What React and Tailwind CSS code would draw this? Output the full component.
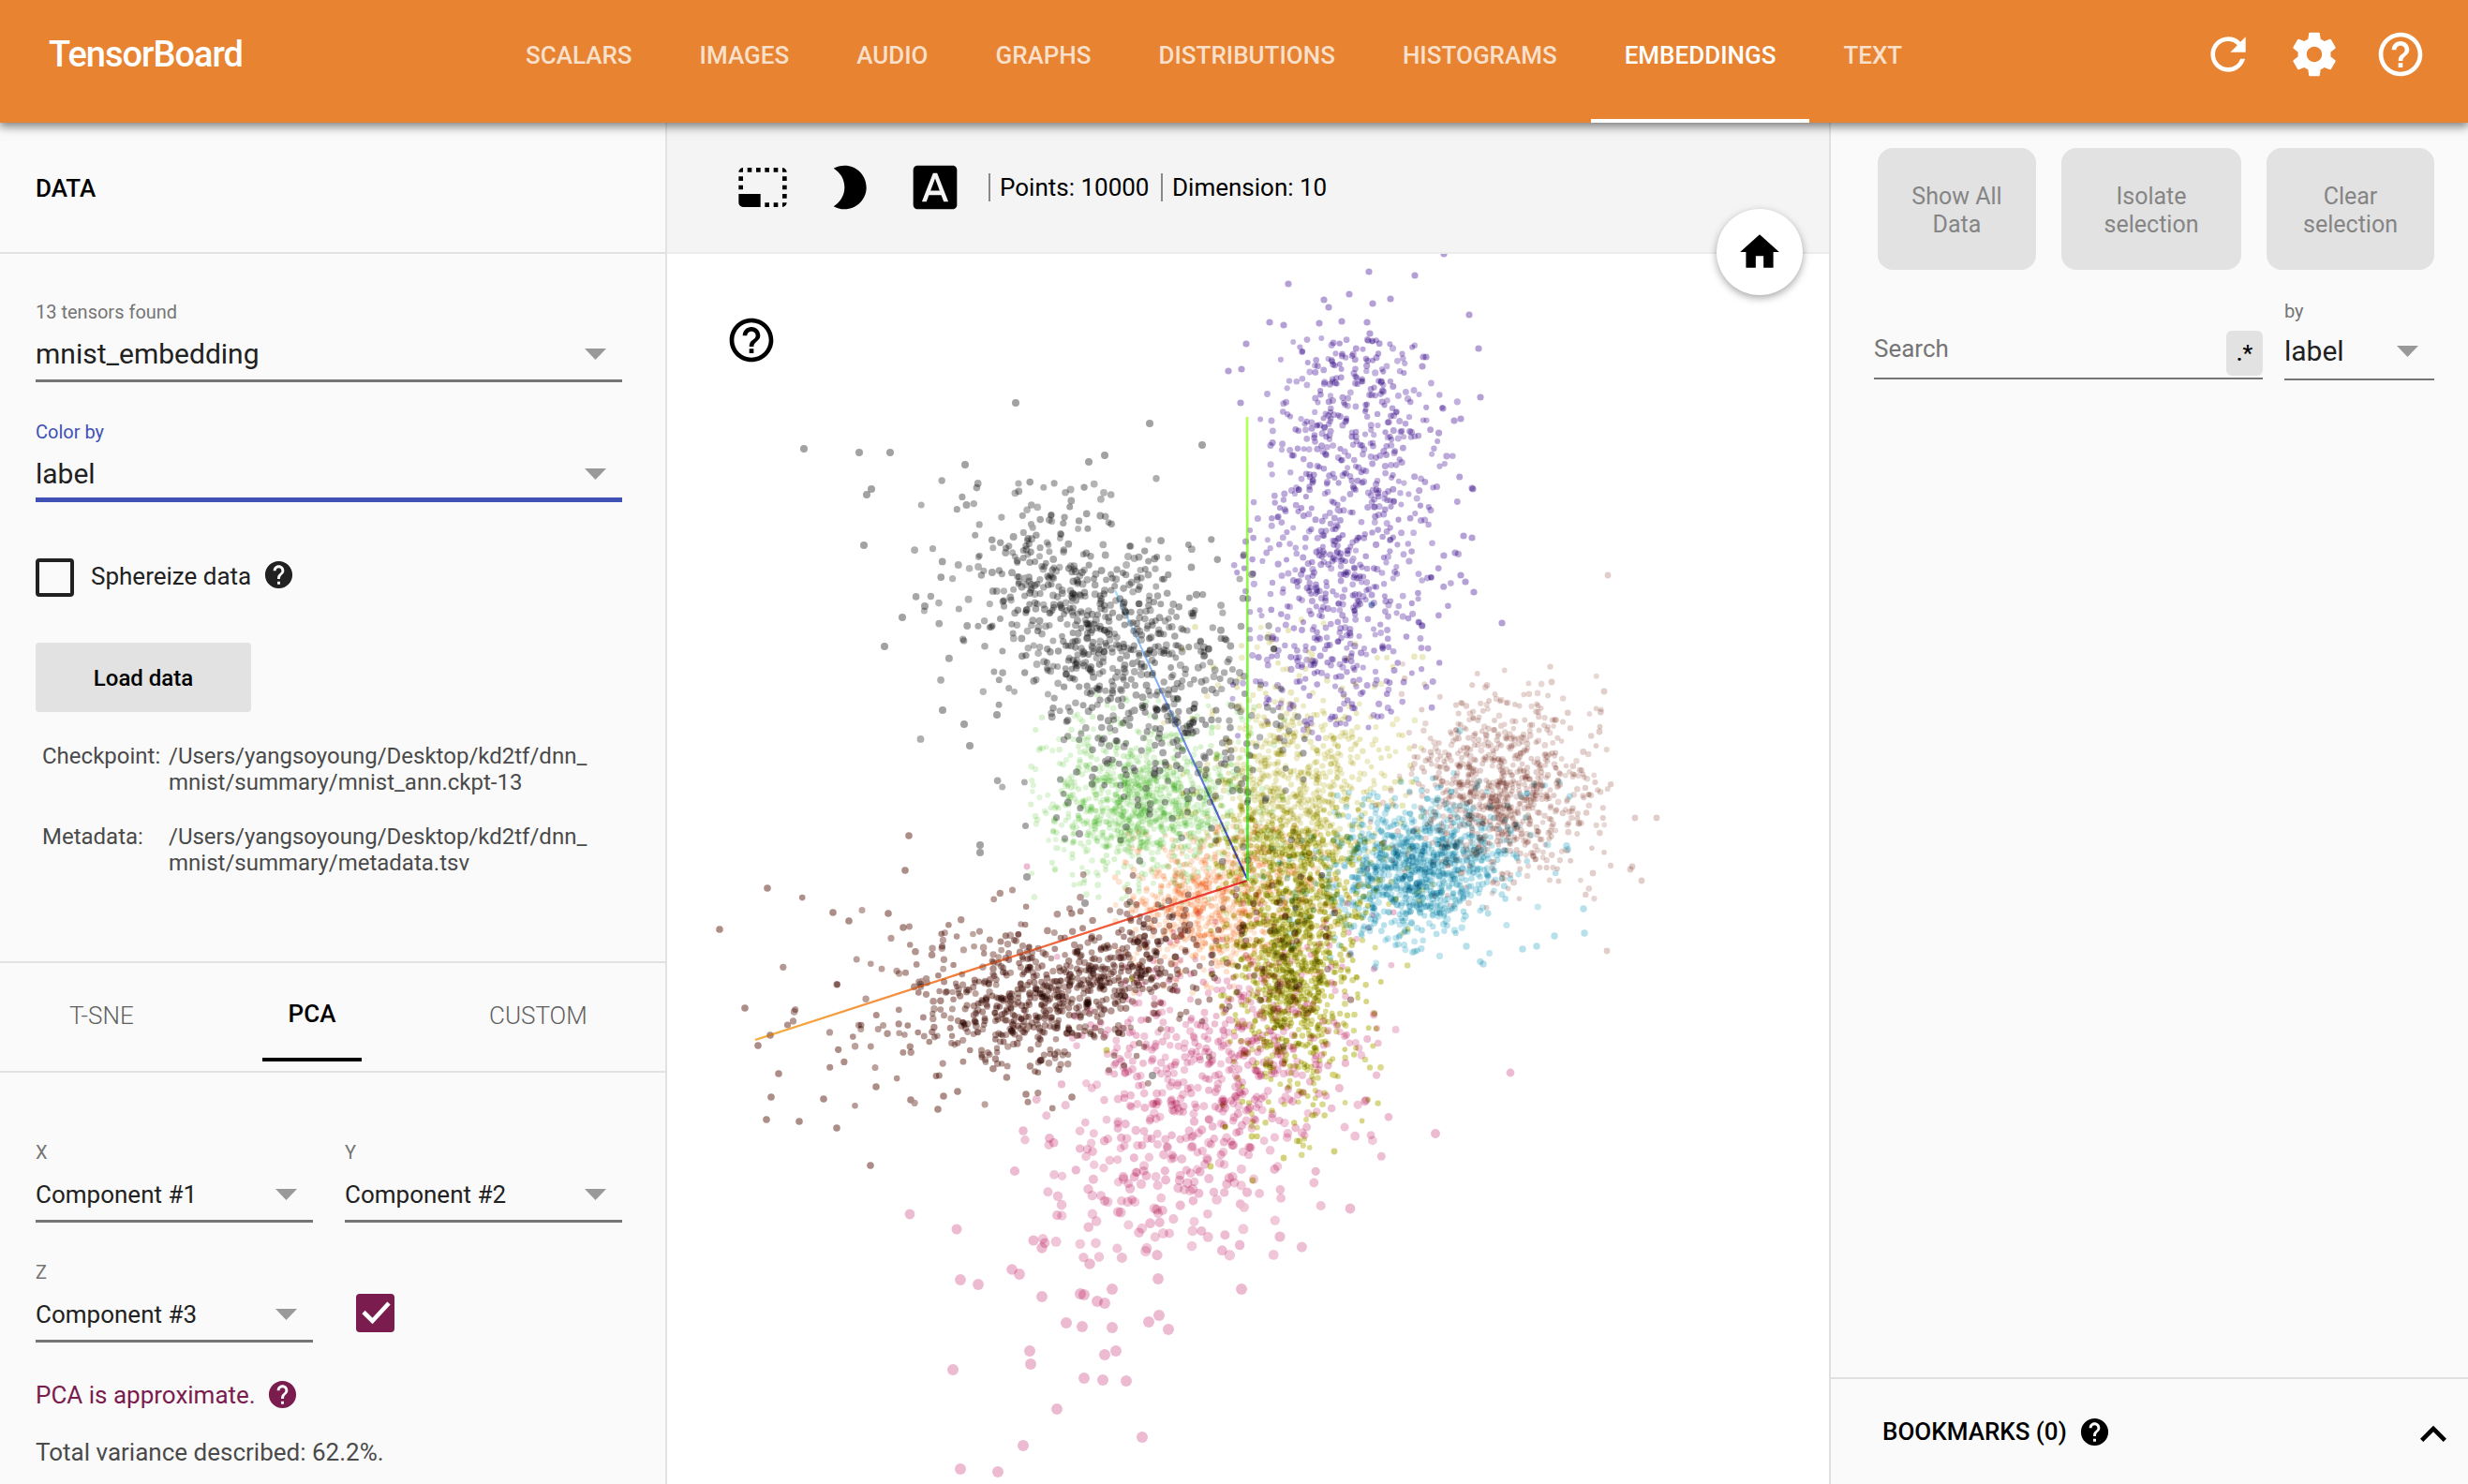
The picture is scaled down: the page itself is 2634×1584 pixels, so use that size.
import React from "react";
import {
  MdBrightness2,
  MdFontDownload,
  MdHelp,
  MdHelpOutline,
  MdHome,
  MdKeyboardArrowUp,
  MdPhotoSizeSelectSmall,
  MdRefresh,
} from "react-icons/md";

/* ---------- projected points ---------- */

function makeRandom(seed) {
  let s = seed;
  return () => {
    s = (s + 0x6d2b79f5) | 0;
    let t = Math.imul(s ^ (s >>> 15), 1 | s);
    t = (t + Math.imul(t ^ (t >>> 7), 61 | t)) ^ t;
    return ((t ^ (t >>> 14)) >>> 0) / 4294967296;
  };
}

const random = makeRandom(20170);
const normal = () =>
  Math.sqrt(-2 * Math.log(1 - random())) * Math.cos(2 * Math.PI * random());

/* Each blob: [count, centre x, centre y, major spread, minor spread, angle in degrees] */
const LABELS = [
  { fill: "#d9f2d0", radius: () => 3, blobs: [[680, 1225, 862, 50, 36, 0], [360, 1200, 850, 66, 50, 0], [60, 1290, 800, 70, 70, 0]] },
  { fill: "#e9e7bb", radius: () => 3, blobs: [[560, 1378, 850, 46, 46, 0], [300, 1395, 825, 70, 80, 0]] },
  { fill: "#fddfca", radius: () => 3, blobs: [[520, 1282, 972, 42, 36, 0], [260, 1330, 940, 54, 54, 0]] },
  { fill: "#e1cdc9", radius: () => 3, blobs: [[560, 1600, 842, 40, 46, 0], [330, 1610, 845, 60, 64, 0]] },
  { fill: "#b6e0ea", radius: () => 3.3, blobs: [[520, 1522, 926, 40, 30, -20], [480, 1500, 926, 64, 42, -15]] },
  { fill: "#b5a0d6", radius: () => 3.2, blobs: [[200, 1458, 465, 46, 46, 0], [520, 1432, 610, 50, 85, 0], [90, 1440, 385, 42, 30, 0], [100, 1420, 710, 75, 50, 0]] },
  { fill: "#d4d37c", radius: () => 3, blobs: [[620, 1374, 1030, 28, 62, 0], [470, 1385, 1035, 44, 90, 0], [200, 1375, 930, 40, 36, 0]] },
  { fill: "#ad8d87", radius: () => 3.4, blobs: [[240, 1098, 1075, 48, 28, -8], [220, 1185, 1038, 46, 24, -28], [370, 1090, 1055, 110, 46, -8], [70, 1330, 950, 90, 70, 0]] },
  { fill: "#a2a2a2", radius: () => 3.6, blobs: [[360, 1188, 685, 75, 42, 52], [380, 1175, 680, 105, 66, 42], [70, 1095, 600, 52, 48, 0], [90, 1250, 800, 75, 65, 20]] },
  { fill: "#edbbd1", radius: (y) => Math.min(5.6, Math.max(3, 3.2 + (y - 1020) / 150)), blobs: [[270, 1305, 1120, 64, 62, 0], [290, 1255, 1200, 70, 80, 0], [130, 1390, 1070, 75, 62, 0], [60, 1235, 1280, 60, 60, 0]] },
];

const BOUNDS = [
  [1100, 740, 1400, 970], [1230, 660, 1530, 1000], [1190, 880, 1450, 1060], [1450, 700, 1720, 970],
  [1340, 800, 1690, 1035], [1312, 360, 1560, 790], [1290, 850, 1510, 1235], [830, 930, 1450, 1185],
  [960, 510, 1400, 930], [1080, 950, 1500, 1345],
];

const OUTLIERS = [
  [], [], [],
  [[1716, 614], [1656, 728], [1712, 738], [1707, 781], [1715, 1015], [1745, 873], [1768, 873], [1752, 940], [1742, 925], [1740, 928]],
  [[1464, 645], [1558, 780], [1691, 996], [1659, 999], [1640, 1010], [1583, 1029], [1625, 1013], [1565, 1010], [1690, 970]],
  [[1541, 271], [1461, 290], [1510, 294], [1375, 303], [1440, 314], [1413, 320], [1484, 319], [1465, 324], [1418, 328], [1568, 336], [1355, 344], [1370, 347], [1408, 345], [1432, 343], [1459, 344], [1462, 356], [1330, 367], [1578, 372], [1519, 381], [1522, 381], [1518, 391], [1580, 424], [1311, 396], [1325, 394], [1324, 430], [1540, 436], [1559, 447], [1552, 449], [1571, 521], [1572, 522], [1562, 572], [1571, 574], [1553, 590], [1559, 614], [1564, 621], [1573, 632], [1603, 665]],
  [[1208, 1045], [1181, 1121], [1337, 1260], [1336, 1213], [1370, 1236], [1424, 1229], [1292, 1245]],
  [[768, 992], [819, 948], [795, 1076], [809, 1116], [831, 1146], [823, 1171], [818, 1195], [853, 1197], [893, 1204], [929, 1244], [1001, 1184], [970, 892], [966, 929], [889, 974], [906, 983], [948, 975], [964, 990], [972, 1174], [1007, 1170], [1022, 1165], [1095, 1168], [1144, 1171], [822, 1105], [879, 1173], [935, 1160]],
  [[858, 479], [917, 483], [950, 483], [1084, 430], [1227, 452], [1283, 475], [1179, 486], [1162, 493], [925, 528], [930, 522], [1030, 496], [922, 582], [963, 659], [944, 690], [987, 647], [1006, 758], [1029, 773], [1035, 796], [1046, 902], [1046, 910], [1096, 936], [1158, 964], [1152, 890], [1230, 1148], [1064, 763]],
  [[971, 1296], [1021, 1312], [1103, 1324], [1112, 1332], [1025, 1366], [1044, 1371], [1080, 1355], [1088, 1360], [1112, 1384], [1163, 1349], [1153, 1381], [1157, 1382], [1171, 1389], [1179, 1391], [1187, 1376], [1236, 1365], [1237, 1404], [1226, 1411], [1247, 1419], [1138, 1412], [1155, 1416], [1187, 1417], [1099, 1442], [1100, 1456], [1179, 1446], [1191, 1442], [1017, 1462], [1157, 1471], [1177, 1473], [1202, 1474], [1128, 1504], [1219, 1534], [1092, 1543], [1025, 1568], [1065, 1571], [1325, 1376], [1366, 1320], [1441, 1290], [1532, 1210], [1612, 1145], [1096, 925], [1083, 1250], [1092, 1207], [1120, 1215]],
];

/* Points are dealt out to layers that multiply onto each other, so overlaps darken. */
const LAYER_COUNT = 48;

function project() {
  const layers = Array.from({ length: LAYER_COUNT }, () => []);
  const deal = (point) => layers[Math.floor(random() * LAYER_COUNT)].push(point);
  LABELS.forEach((label, i) => {
    const [x0, y0, x1, y1] = BOUNDS[i];
    label.blobs.forEach(([count, cx, cy, major, minor, angle]) => {
      const c = Math.cos((angle * Math.PI) / 180);
      const s = Math.sin((angle * Math.PI) / 180);
      for (let n = 0; n < count; n++) {
        const u = normal() * major;
        const v = normal() * minor;
        const x = cx + u * c - v * s;
        const y = cy + u * s + v * c;
        if (x < x0 || x > x1 || y < y0 || y > y1) continue;
        deal([x, y, label.radius(y) + random() * 0.6 - 0.2, label.fill, 0.78 + random() * 0.22]);
      }
    });
    OUTLIERS[i].forEach(([x, y]) => deal([x, y, label.radius(y) + 0.4, label.fill, 1]));
  });
  return layers;
}

const LAYERS = project();

function Scatter() {
  return (
    <svg className="isolate block h-full w-full bg-white" viewBox="712 271 1240 1313" preserveAspectRatio="none">
      <defs>
        <linearGradient id="axisX" gradientUnits="userSpaceOnUse" x1="1331" y1="940" x2="806" y2="1110">
          <stop offset="0" stopColor="#ee3a3a" />
          <stop offset="1" stopColor="#f6b040" />
        </linearGradient>
        <linearGradient id="axisY" gradientUnits="userSpaceOnUse" x1="1331" y1="940" x2="1331" y2="445">
          <stop offset="0" stopColor="#52e83a" />
          <stop offset="1" stopColor="#b8ff5c" />
        </linearGradient>
        <linearGradient id="axisZ" gradientUnits="userSpaceOnUse" x1="1331" y1="938" x2="1190" y2="630">
          <stop offset="0" stopColor="#3a44dc" />
          <stop offset="1" stopColor="#a5e0ff" />
        </linearGradient>
      </defs>
      <g fill="none">
        <path d="M1331 940L806 1110" stroke="url(#axisX)" strokeWidth="2.2" />
        <path d="M1331 938L1190 630" stroke="url(#axisZ)" strokeWidth="2" />
        <path d="M1331.5 940L1331 445" stroke="url(#axisY)" strokeWidth="2.6" />
      </g>
      {LAYERS.map((points, k) => (
        <g key={k} className="mix-blend-multiply">
          {points.map(([x, y, r, fill, alpha], n) => (
            <circle key={n} cx={x.toFixed(1)} cy={y.toFixed(1)} r={r.toFixed(1)} fill={fill} fillOpacity={alpha.toFixed(2)} />
          ))}
        </g>
      ))}
      <path d="M1331 940L806 1110" stroke="url(#axisX)" strokeWidth="2" opacity="0.45" />
      <path d="M1331 938L1190 630" stroke="url(#axisZ)" strokeWidth="1.8" opacity="0.35" />
      <path d="M1331.5 940L1331 445" stroke="url(#axisY)" strokeWidth="2.4" opacity="0.6" />
    </svg>
  );
}

/* ---------- small pieces ---------- */

function Gear({ className }) {
  return (
    <svg viewBox="0 0 24 24" fill="currentColor" className={className}>
      <path d="M19.43 12.98c.04-.32.07-.64.07-.98s-.03-.66-.07-.98l2.11-1.65c.19-.15.24-.42.12-.64l-2-3.46c-.12-.22-.39-.3-.61-.22l-2.49 1c-.52-.4-1.08-.73-1.69-.98l-.38-2.65C14.46 2.18 14.25 2 14 2h-4c-.25 0-.46.18-.49.42l-.38 2.65c-.61.25-1.17.59-1.69.98l-2.49-1c-.23-.09-.49 0-.61.22l-2 3.46c-.13.22-.07.49.12.64l2.11 1.65c-.04.32-.07.65-.07.98s.03.66.07.98l-2.11 1.65c-.19.15-.24.42-.12.64l2 3.46c.12.22.39.3.61.22l2.49-1c.52.4 1.08.73 1.69.98l.38 2.65c.03.24.24.42.49.42h4c.25 0 .46-.18.49-.42l.38-2.65c.61-.25 1.17-.59 1.69-.98l2.49 1c.23.09.49 0 .61-.22l2-3.46c.12-.22.07-.49-.12-.64l-2.11-1.65zM12 15.5c-1.93 0-3.5-1.57-3.5-3.5s1.57-3.5 3.5-3.5 3.5 1.57 3.5 3.5-1.57 3.5-3.5 3.5z" />
    </svg>
  );
}

function Caret() {
  return (
    <svg viewBox="0 0 23 12" className="h-[12px] w-[23px]" fill="#999999">
      <path d="M0 0h23L11.5 12z" />
    </svg>
  );
}

function Select({ label, value, big, active }) {
  return (
    <div className={active ? "h-[87px] border-b-[5px] border-[#3f51b5]" : "h-[87px] border-b-[3px] border-[#757575]"}>
      <div className={active ? "text-[20px] leading-[24px] text-[#3f51b5]" : "text-[20px] leading-[24px] text-[#757575]"}>{label}</div>
      <div className="mt-[15px] flex h-[36px] items-center justify-between pr-[17px]">
        <span className={big ? "text-[30px] leading-[36px] text-[#212121]" : "text-[26px] leading-[36px] text-[#212121]"}>{value}</span>
        <Caret />
      </div>
    </div>
  );
}

const NAV = ["SCALARS", "IMAGES", "AUDIO", "GRAPHS", "DISTRIBUTIONS", "HISTOGRAMS", "EMBEDDINGS", "TEXT"];

function Header() {
  return (
    <header className="relative z-10 flex h-[131px] bg-[#e78331] text-white shadow-[0_3px_10px_1px_rgba(0,0,0,0.5)]">
      <div className="w-[525px] pt-[34px] pl-[52px] text-[38px] leading-[48px] font-medium tracking-[-1px]">TensorBoard</div>
      <nav className="flex h-full">
        {NAV.map((name) => (
          <div
            key={name}
            className={
              name === "EMBEDDINGS"
                ? "h-full border-b-4 border-white px-[36px] pt-[42px] text-[26px] leading-[34px] font-medium"
                : "h-full px-[36px] pt-[42px] text-[26px] leading-[34px] font-medium text-white/75"
            }
          >
            {name}
          </div>
        ))}
      </nav>
      <div className="ml-auto flex gap-[36px] pt-[30px] pr-[44px]">
        <MdRefresh className="size-[56px]" />
        <Gear className="size-[56px]" />
        <MdHelpOutline className="size-[56px]" />
      </div>
    </header>
  );
}

function PathRow({ name, lines }) {
  return (
    <div className="flex text-[24px] leading-[28px] text-[#4a4a4a]">
      <div className="w-[135px]">{name}</div>
      <div>
        {lines.map((l) => (
          <div key={l}>{l}</div>
        ))}
      </div>
    </div>
  );
}

function DataPanel() {
  return (
    <aside className="flex w-[712px] shrink-0 flex-col border-r-2 border-[#e2e2e2] bg-[#fafafa]">
      <div className="flex h-[140px] items-center border-b-2 border-[#e2e2e2] pt-[2px] pl-[38px] text-[26px] font-medium text-black">DATA</div>
      <div className="h-[757px] border-b-2 border-[#e2e2e2] px-[38px] pt-[50px]">
        <div className="w-[626px]">
          <Select label="13 tensors found" value="mnist_embedding" big />
          <div className="h-[41px]" />
          <Select label="Color by" value="label" big active />
        </div>
        <div className="mt-[60px] flex h-[41px] items-center">
          <div className="size-[41px] rounded-[4px] border-4 border-[#212121]" />
          <div className="mb-[3px] ml-[18px] text-[26px] leading-[30px] text-[#212121]">Sphereize data</div>
          <MdHelp className="mb-[6px] ml-[12px] size-[35px] text-[#212121]" />
        </div>
        <div className="mt-[49px] flex h-[74px] w-[230px] items-center justify-center rounded-[4px] bg-[#e2e2e2] pt-[1px] text-[24px] font-medium text-black">
          Load data
        </div>
        <div className="mt-[33px] flex flex-col gap-[30px] pl-[7px]">
          <PathRow name="Checkpoint:" lines={["/Users/yangsoyoung/Desktop/kd2tf/dnn_", "mnist/summary/mnist_ann.ckpt-13"]} />
          <PathRow name="Metadata:" lines={["/Users/yangsoyoung/Desktop/kd2tf/dnn_", "mnist/summary/metadata.tsv"]} />
        </div>
      </div>
      <div className="flex h-[117px] border-b-2 border-[#e2e2e2] pl-[74px] text-[26px] leading-[30px]">
        <div className="w-[206px] pt-[41px] font-light text-[#606060]">T-SNE</div>
        <div className="h-[105px] w-[106px] border-b-4 border-black pt-[39px] text-center font-medium text-black">PCA</div>
        <div className="ml-[136px] pt-[41px] font-light text-[#606060]">CUSTOM</div>
      </div>
      <div className="px-[38px] pt-[73px]">
        <div className="grid w-[626px] grid-cols-[296px_296px] justify-between gap-y-[41px]">
          <Select label="X" value="Component #1" />
          <Select label="Y" value="Component #2" />
          <Select label="Z" value="Component #3" />
          <div className="flex items-end pb-[11px] pl-[12px]">
            <svg viewBox="0 0 41 41" className="size-[41px]">
              <rect width="41" height="41" rx="4" fill="#7b1c4e" />
              <path d="M8 19.5l9.5 9.5L35 10" fill="none" stroke="#fff" strokeWidth="4.6" />
            </svg>
          </div>
        </div>
        <div className="mt-[39px] flex h-[35px] items-center text-[26px] text-[#7b1c4e]">
          <span>PCA is approximate.</span>
          <MdHelp className="mb-[3px] ml-[11px] size-[35px]" />
        </div>
        <div className="mt-[28px] text-[26px] leading-[30px] text-[#4a4a4a]">Total variance described: 62.2%.</div>
      </div>
    </aside>
  );
}

function Projector() {
  return (
    <main className="relative flex w-[1240px] shrink-0 flex-col bg-white">
      <div className="flex h-[140px] shrink-0 items-center border-b-2 border-[#ececec] bg-[#f4f4f4] pl-[74px] text-[26px] text-black">
        <MdPhotoSizeSelectSmall className="size-[56px]" />
        <MdBrightness2 className="ml-[36px] size-[56px]" />
        <MdFontDownload className="ml-[36px] size-[56px]" />
        <div className="ml-[29px] h-[30px] w-[2px] bg-[#888888]" />
        <div className="ml-[10px] w-[172px]">Points: 10000</div>
        <div className="h-[30px] w-[2px] bg-[#888888]" />
        <div className="ml-[10px]">Dimension: 10</div>
      </div>
      <div className="h-[1313px] overflow-hidden">
        <Scatter />
      </div>
      <MdHelpOutline className="absolute top-[204px] left-[62px] size-[56px] text-black" />
      <div className="absolute top-[92px] left-[1120px] flex size-[92px] items-center justify-center rounded-full bg-white shadow-[0_3px_8px_rgba(0,0,0,0.35)]">
        <MdHome className="mr-px size-[50px] text-black" />
      </div>
    </main>
  );
}

function Inspector() {
  return (
    <aside className="flex flex-1 flex-col border-l-2 border-[#e0e0e0] bg-[#fafafa]">
      <div className="flex h-[157px] pt-[27px] pl-[50px] text-center text-[25px] leading-[30px] text-[#858585]">
        <div className="flex h-[130px] w-[169px] items-center justify-center rounded-[16px] bg-[#e2e2e2] pt-[3px]">Show All<br />Data</div>
        <div className="ml-[27px] flex h-[130px] w-[192px] items-center justify-center rounded-[16px] bg-[#e2e2e2] pt-[3px]">Isolate<br />selection</div>
        <div className="ml-[27px] flex h-[130px] w-[179px] items-center justify-center rounded-[16px] bg-[#e2e2e2] pt-[3px]">Clear<br />selection</div>
      </div>
      <div className="flex pt-[32px] pl-[46px]">
        <div className="mt-[33px] flex h-[52px] w-[415px] items-start justify-between border-b-2 border-[#757575]">
          <span className="pt-[3px] text-[26px] leading-[32px] text-[#757575]">Search</span>
          <span className="flex h-[48px] w-[39px] items-center justify-center rounded-[6px] bg-[#e2e2e2] text-[24px] font-medium text-black">.*</span>
        </div>
        <div className="ml-[23px] h-[86px] w-[160px] border-b-2 border-[#757575]">
          <div className="text-[20px] leading-[24px] text-[#757575]">by</div>
          <div className="mt-[13px] flex h-[36px] items-center justify-between pr-[17px]">
            <span className="text-[30px] leading-[36px] text-[#212121]">label</span>
            <Caret />
          </div>
        </div>
      </div>
      <div className="mt-auto flex h-[114px] items-center border-t-2 border-[#e0e0e0] pl-[55px] text-[26px] font-medium text-black">
        <span className="pt-[1px]">BOOKMARKS (0)</span>
        <MdHelp className="ml-[12px] size-[35px]" />
        <MdKeyboardArrowUp className="mt-[6px] mr-[9px] ml-auto size-[56px]" />
      </div>
    </aside>
  );
}

export default function App() {
  return (
    <div className="flex h-[1584px] w-[2634px] flex-col overflow-hidden bg-[#fafafa] font-['Roboto','Liberation_Sans',sans-serif]">
      <Header />
      <div className="flex h-[1453px]">
        <DataPanel />
        <Projector />
        <Inspector />
      </div>
    </div>
  );
}
